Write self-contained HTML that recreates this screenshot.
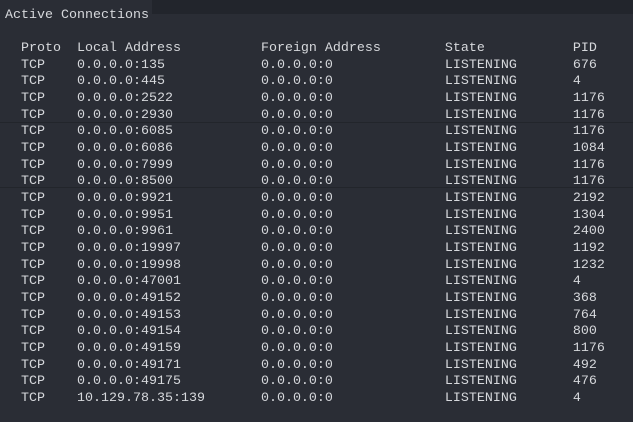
<!DOCTYPE html>
<html><head><style>
body{margin:0;width:633px;height:422px;background:#2a2d35;overflow:hidden;position:relative;font-family:"Liberation Mono",monospace;font-size:13.33px;color:#d6d8dc}
.top{position:absolute;left:0;top:0;width:633px;height:14px;background:#22252c}
.tt{position:absolute;left:0;top:0;width:152px;height:28px;background:#2a2d35}
.title{position:absolute;left:5px;top:8px;line-height:16px}
.hl{position:absolute;left:0;width:633px;height:1px;background:#22252b}
pre{position:absolute;left:21px;top:41px;margin:0;font:inherit;line-height:16.67px;white-space:pre}
</style></head><body>
<div class="top"></div><div class="tt"></div>
<div class="title">Active Connections</div>
<div class="hl" style="top:122px"></div>
<div class="hl" style="top:187px"></div>
<pre>Proto  Local Address          Foreign Address        State           PID
TCP    0.0.0.0:135            0.0.0.0:0              LISTENING       676
TCP    0.0.0.0:445            0.0.0.0:0              LISTENING       4
TCP    0.0.0.0:2522           0.0.0.0:0              LISTENING       1176
TCP    0.0.0.0:2930           0.0.0.0:0              LISTENING       1176
TCP    0.0.0.0:6085           0.0.0.0:0              LISTENING       1176
TCP    0.0.0.0:6086           0.0.0.0:0              LISTENING       1084
TCP    0.0.0.0:7999           0.0.0.0:0              LISTENING       1176
TCP    0.0.0.0:8500           0.0.0.0:0              LISTENING       1176
TCP    0.0.0.0:9921           0.0.0.0:0              LISTENING       2192
TCP    0.0.0.0:9951           0.0.0.0:0              LISTENING       1304
TCP    0.0.0.0:9961           0.0.0.0:0              LISTENING       2400
TCP    0.0.0.0:19997          0.0.0.0:0              LISTENING       1192
TCP    0.0.0.0:19998          0.0.0.0:0              LISTENING       1232
TCP    0.0.0.0:47001          0.0.0.0:0              LISTENING       4
TCP    0.0.0.0:49152          0.0.0.0:0              LISTENING       368
TCP    0.0.0.0:49153          0.0.0.0:0              LISTENING       764
TCP    0.0.0.0:49154          0.0.0.0:0              LISTENING       800
TCP    0.0.0.0:49159          0.0.0.0:0              LISTENING       1176
TCP    0.0.0.0:49171          0.0.0.0:0              LISTENING       492
TCP    0.0.0.0:49175          0.0.0.0:0              LISTENING       476
TCP    10.129.78.35:139       0.0.0.0:0              LISTENING       4</pre>
</body></html>
